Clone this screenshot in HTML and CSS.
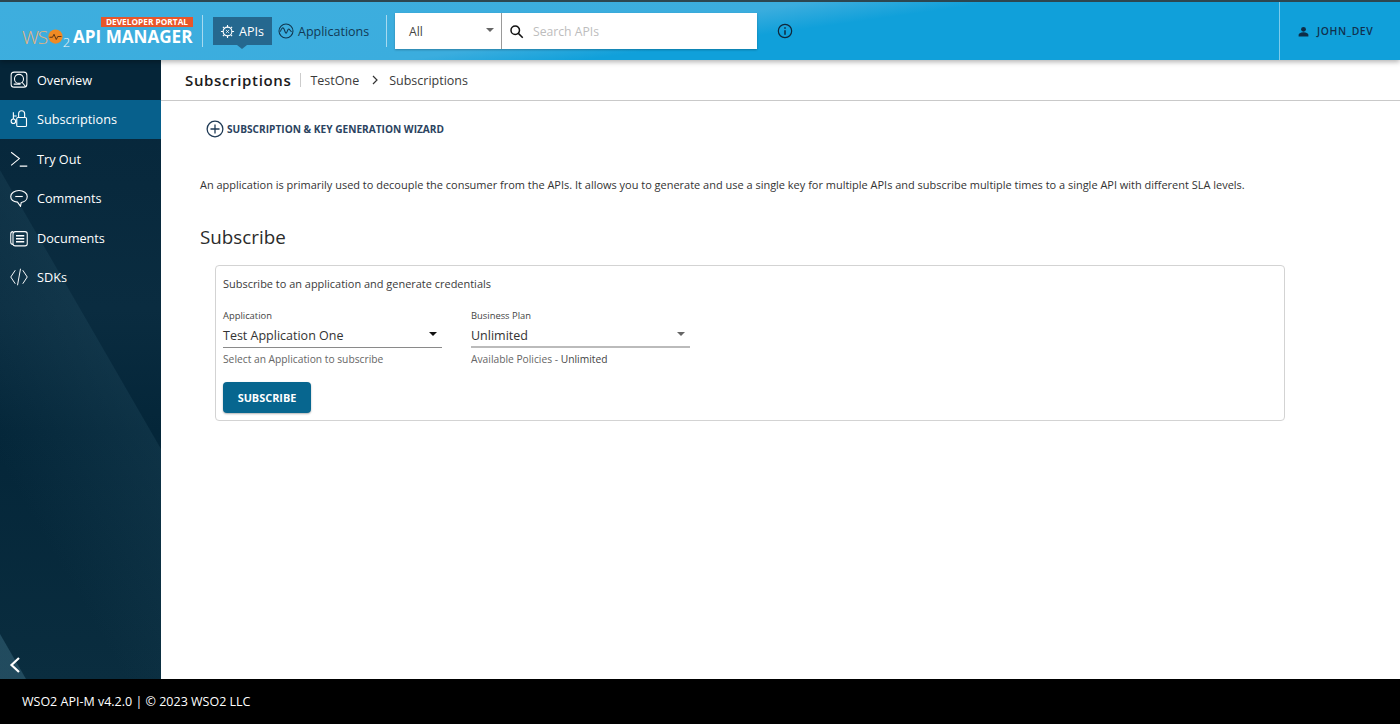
FILE: index.html
```html
<!DOCTYPE html>
<html lang="en">
<head>
  <meta charset="UTF-8" />
  <title>Subscriptions - Developer Portal</title>
  <link rel="stylesheet" href="styles.css">
</head>
<body>

  <header class="topbar">
    <div class="brand">
      <span class="badge">DEVELOPER PORTAL</span>
      <span class="wso">WS<svg class="wso-o" viewBox="0 0 20 20"><circle cx="10" cy="10" r="9.5" fill="#f08a24"/><path d="M2 11h4l2-4 3 7 2-4h5" fill="none" stroke="#5a3312" stroke-width="1.3"/></svg><span class="wso-two">2</span></span>
      <span class="product">API MANAGER</span>
    </div>
    <span class="divider"></span>
    <nav class="mainnav">
      <a class="mainnav-item active" href="#">
        <svg class="icon-gear" viewBox="0 0 24 24" fill="none" stroke="#fff" stroke-width="1.7"><circle cx="12" cy="12" r="7"/><path d="M12 1.5V5M12 19v3.500M1.500 12H5M19 12h3.500M4.600 4.600l2.500 2.500M16.900 16.900l2.500 2.500M4.600 19.400l2.500-2.500M16.900 7.100l2.500-2.500"/><path d="M9.500 9.500l5 5M14.500 9.500l-5 5" stroke-width="1.200"/></svg>
        APIs
      </a>
      <a class="mainnav-item" href="#">
        <svg class="icon-app" viewBox="0 0 24 24" fill="none" stroke="#10364f" stroke-width="1.600"><circle cx="12" cy="12" r="10.500"/><path d="M3.500 13c2-6 4-7 5.500-4s2 7 3.500 6 2-6 3.500-6 2 3 4.500 4"/></svg>
        Applications
      </a>
    </nav>
    <span class="divider"></span>
    <div class="search">
      <div class="search-cat">All<span class="caret caret-grey"></span></div>
      <div class="search-field">
        <svg class="icon-search" viewBox="0 0 24 24" fill="none" stroke="#111" stroke-width="2.400"><circle cx="10" cy="10" r="6.800"/><path d="M15 15l7 7"/></svg>
        <span>Search APIs</span>
      </div>
    </div>
    <svg class="icon-info" viewBox="0 0 24 24" fill="none" stroke="#10263a" stroke-width="1.800"><circle cx="12" cy="12" r="10"/><path d="M12 11v6.500" stroke-width="2.200"/><path d="M12 6.500v2.200" stroke-width="2.200"/></svg>
    <div class="user">
      <svg class="icon-user" viewBox="0 0 24 24" fill="#0e2c47"><circle cx="12" cy="8" r="4.500"/><path d="M3 21v-2.500c0-3.500 6-5 9-5s9 1.500 9 5V21z"/></svg>
      JOHN_DEV
    </div>
  </header>

  <div class="middle">
    <aside class="sidebar">
      <ul class="sidenav">
        <li class="sidenav-item first">
          <svg viewBox="0 0 24 24" fill="none" stroke="#fff" stroke-width="1.400"><rect x="1.500" y="1.500" width="21" height="20" rx="4"/><circle cx="12" cy="10.500" r="6"/><path d="M16 15l5 6M5 17.500h9"/></svg>
          Overview
        </li>
        <li class="sidenav-item active">
          <svg viewBox="0 0 24 24" fill="none" stroke="#fff" stroke-width="1.500"><rect x="9" y="10" width="13" height="12" rx="1.500"/><path d="M11.500 10V5a4 4 0 0 1 8 0v5"/><circle cx="4.500" cy="15" r="3"/><path d="M4.500 3v9M4.500 8H9"/></svg>
          Subscriptions
        </li>
        <li class="sidenav-item">
          <svg viewBox="0 0 24 24" fill="none" stroke="#fff" stroke-width="1.400"><path d="M1.500 3l11 8.500-11 9M13 21.500h10"/></svg>
          Try Out
        </li>
        <li class="sidenav-item">
          <svg viewBox="0 0 24 24" fill="none" stroke="#fff" stroke-width="1.500"><path d="M12 2c6 0 11 3.500 11 8s-4 7.500-8 8l-1 5-4-5.500C5 17 1 14.500 1 10s5-8 11-8z"/><path d="M7 10h10"/></svg>
          Comments
        </li>
        <li class="sidenav-item">
          <svg viewBox="0 0 24 24" fill="none" stroke="#fff" stroke-width="1.400"><rect x="4" y="3.500" width="19" height="19" rx="3"/><path d="M4 3.500c-2 0-3 1.500-3 3v11c0 2 1 3 3 3"/><path d="M8 9h11M8 13h11M8 17h11" stroke-width="2"/></svg>
          Documents
        </li>
        <li class="sidenav-item">
          <svg viewBox="0 0 24 24" fill="none" stroke="#fff" stroke-width="1.300"><path d="M7 3L1 12l6 9M17 3l6 9-6 9M14 1l-4 22"/></svg>
          SDKs
        </li>
      </ul>
      <svg class="collapse" viewBox="0 0 12 18" fill="none" stroke="#fff" stroke-width="2.200"><path d="M10 2L2.500 9l7.500 7"/></svg>
    </aside>

    <main class="content">
      <div class="crumbs">
        <h1>Subscriptions</h1>
        <span class="crumb-api">TestOne</span>
        <svg class="crumb-sep" viewBox="0 0 8 10" fill="none" stroke="#333" stroke-width="1.200"><path d="M2 1l4 4-4 4"/></svg>
        <span>Subscriptions</span>
      </div>

      <div class="page">
        <a class="wizard" href="#">
          <svg viewBox="0 0 24 24" fill="none" stroke="#1f3a55" stroke-width="1.700"><circle cx="12" cy="12" r="10.500"/><path d="M12 6v12M6 12h12"/></svg>
          SUBSCRIPTION &amp; KEY GENERATION WIZARD
        </a>
        <p class="intro">An application is primarily used to decouple the consumer from the APIs. It allows you to generate and use a single key for multiple APIs and subscribe multiple times to a single API with different SLA levels.</p>
        <h2>Subscribe</h2>

        <section class="card">
          <p class="card-title">Subscribe to an application and generate credentials</p>
          <div class="fields">
            <div class="field">
              <label>Application</label>
              <div class="select">Test Application One<span class="caret"></span></div>
              <p class="hint">Select an Application to subscribe</p>
            </div>
            <div class="field">
              <label>Business Plan</label>
              <div class="select select-plan">Unlimited<span class="caret caret-grey"></span></div>
              <p class="hint">Available Policies - <span class="hint-strong">Unlimited</span></p>
            </div>
          </div>
          <button class="subscribe">SUBSCRIBE</button>
        </section>
      </div>
    </main>
  </div>

  <footer class="footer">WSO2 API-M v4.2.0 | © 2023 WSO2 LLC</footer>

</body>
</html>
```

FILE: styles.css
```css
* { box-sizing: border-box; margin: 0; padding: 0; font-family: "Open Sans", sans-serif; }
html, body { height: 100%; overflow: hidden; }
body { display: flex; flex-direction: column; height: 724px; background: #fff; color: #2b2b2b; }
a { text-decoration: none; color: inherit; }
ul { list-style: none; }

/* top bar */
.topbar {
  height: 60px;
  flex: none;
  display: flex;
  align-items: center;
  padding-left: 22px;
  border-top: 2px solid #2d4650;
  background: linear-gradient(172deg, #3eaede 0%, #3badde 45%, #10a0da 55%, #10a0da 100%);
  box-shadow: 0 2px 5px rgba(0,0,0,0.3);
  position: relative;
  z-index: 2;
}
.brand {
  position: relative;
  width: 172px;
  display: flex;
  align-items: center;
  padding-top: 11px;
}
.badge {
  position: absolute;
  left: 79px;
  top: 2px;
  width: 92px;
  height: 10px;
  background: #e8562a;
  color: #fff;
  font-size: 8.300px;
  line-height: 10px;
  font-weight: 700;
  text-align: center;
  white-space: nowrap;
}
.wso {
  display: flex;
  align-items: center;
  width: 51px;
  flex: none;
  font-size: 19px;
  font-weight: 300;
  color: #e9b27c;
  letter-spacing: -1.300px;
  line-height: 20px;
}
.wso-o { width: 15px; height: 15px; margin-left: 1px; flex: none; }
.wso-two { font-size: 13px; color: #f4f4f4; letter-spacing: 0; margin-top: 10px; line-height: 12px; }
.product {
  font-size: 17.100px;
  font-weight: 700;
  color: #fff;
  line-height: 22px;
  white-space: nowrap;
}
.divider { width: 1px; height: 32px; background: rgba(255,255,255,0.55); flex: none; }
.brand + .divider { margin-left: 8px; margin-right: 10px; }
.mainnav { display: flex; align-items: center; width: 173px; }
.mainnav-item {
  height: 28px;
  display: flex;
  align-items: center;
  gap: 4px;
  font-size: 12.500px;
  color: #123a55;
  position: relative;
  padding-left: 6px;
}
.mainnav-item.active {
  width: 59px;
  padding-left: 7px;
  background: #25688f;
  color: #fff;
}
.mainnav-item.active::after {
  content: "";
  position: absolute;
  left: 24px;
  bottom: -4px;
  border-left: 5px solid transparent;
  border-right: 5px solid transparent;
  border-top: 4px solid #25688f;
}
.icon-gear { width: 15px; height: 15px; }
.icon-app { width: 16px; height: 16px; }
.search {
  display: flex;
  height: 36px;
  width: 362px;
  margin-left: 8px;
  background: #fff;
  box-shadow: 0 1px 2px rgba(0,0,0,0.25);
}
.search-cat {
  width: 107px;
  border-right: 1px solid #999;
  display: flex;
  align-items: center;
  justify-content: space-between;
  padding: 0 7px 0 14px;
  font-size: 12.200px;
  color: #444;
}
.search-field {
  flex: 1;
  display: flex;
  align-items: center;
  gap: 9px;
  padding-left: 7px;
  font-size: 12.200px;
  color: #bdbdbd;
}
.icon-search { width: 15px; height: 15px; }
.icon-info { width: 16px; height: 16px; margin-left: 20px; }
.user {
  margin-left: auto;
  width: 121px;
  height: 100%;
  border-left: 1px solid rgba(255,255,255,0.45);
  display: flex;
  align-items: center;
  gap: 7px;
  padding-left: 17px;
  font-size: 10.400px;
  font-weight: 600;
  letter-spacing: 0.6px;
  color: #10304e;
}
.icon-user { width: 13px; height: 13px; }

/* sidebar */
.middle { flex: 1; display: flex; min-height: 0; }
.sidebar {
  width: 161px;
  flex: none;
  display: flex;
  flex-direction: column;
  justify-content: space-between;
  background:
    linear-gradient(240deg, transparent 194px, rgba(36,78,98,0.3) 195px, transparent 340px),
    linear-gradient(60deg, rgba(44,88,108,0.7) 22px, transparent 23px),
    linear-gradient(180deg, #06263a 0%, #0a2c40 40%, #042639 60%, #0a2d3f 100%);
}
.sidenav-item {
  height: 39.500px;
  display: flex;
  align-items: center;
  gap: 9px;
  padding-left: 10px;
  font-size: 12.700px;
  color: #fff;
}
.sidenav-item.first { background: #052538; }
.sidenav-item.active { background: #07608c; }
.sidenav-item svg { width: 18px; height: 18px; flex: none; }
.collapse { width: 12px; height: 18px; margin: 0 0 5px 9px; flex: none; }

/* content */
.content { flex: 1; min-width: 0; }
.crumbs {
  height: 41px;
  display: flex;
  align-items: center;
  padding-left: 24px;
  border-bottom: 1px solid #c9c9c9;
  font-size: 12.500px;
  color: #3a3a3a;
}
.crumbs h1 {
  font-size: 15px;
  font-weight: 600;
  color: #1b1b1b;
  padding-right: 9px;
  border-right: 1px solid #ccc;
  line-height: 14px;
  letter-spacing: 0.650px;
}
.crumb-api { margin-left: 9px; }
.crumb-sep { width: 8px; height: 10px; margin: 0 10px 0 12px; }
.page { padding: 0 115px 0 39px; }
.wizard {
  display: flex;
  align-items: center;
  margin: 18px 0 0 6px;
  height: 20px;
  font-size: 10.150px;
  font-weight: 700;
  color: #2b4360;
}
.wizard svg { width: 18px; height: 18px; margin-right: 3px; }
.intro { margin-top: 37px; font-size: 10.970px; line-height: 17px; color: #333; white-space: nowrap; }
h2 { margin-top: 31px; font-size: 18.800px; font-weight: 400; line-height: 26px; color: #2b2b2b; }
.card {
  margin: 15px 0 0 15px;
  width: 1070px;
  height: 156px;
  border: 1px solid #d3d3d3;
  border-radius: 4px;
  padding: 10px 7px;
}
.card-title { font-size: 10.960px; line-height: 16px; color: #3a3a3a; }
.fields { display: flex; gap: 29px; margin-top: 17px; }
.field { width: 219px; }
.field label { display: block; font-size: 9.400px; line-height: 14px; color: #444; }
.select {
  height: 25px;
  display: flex;
  align-items: center;
  justify-content: space-between;
  padding-right: 5px;
  border-bottom: 1px solid #8a8a8a;
  font-size: 12.500px;
  color: #333;
}
.select-plan { border-bottom: 2px solid #bbb; padding-top: 1px; }
.caret {
  width: 0;
  height: 0;
  border-left: 4.500px solid transparent;
  border-right: 4.500px solid transparent;
  border-top: 4.500px solid #111;
  margin-bottom: 2px;
}
.caret-grey { border-top-color: #666; }
.hint { font-size: 10.250px; line-height: 14px; color: #666; margin-top: 4px; }
.hint-strong { color: #444; }
.subscribe {
  display: block;
  margin-top: 16px;
  width: 88px;
  height: 31px;
  border: 0;
  border-radius: 4px;
  background: #07668f;
  color: #fff;
  font-size: 10.900px;
  font-weight: 700;
  box-shadow: 0 1px 2px rgba(0,0,0,0.3);
}

/* footer */
.footer {
  height: 45px;
  flex: none;
  padding: 14px 0 0 22px;
  background: #000;
  color: #fff;
  font-size: 12.500px;
  line-height: 17px;
}
```
